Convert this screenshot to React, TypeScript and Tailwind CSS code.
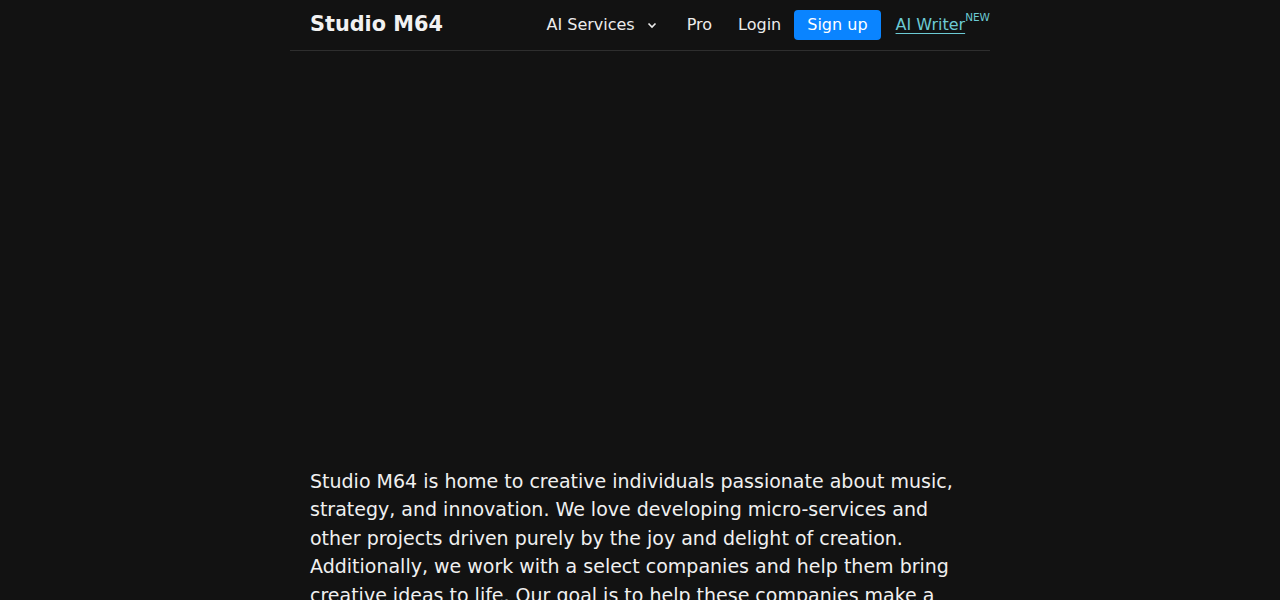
import React from 'react';

const NavLink = ({ children }: { children: React.ReactNode }) => (
  <a href="#" className="px-[13px] text-[16px] leading-[22px] text-[#ececec]">
    {children}
  </a>
);

export default function App() {
  return (
    <div className="min-h-[600px] bg-[#121212] text-[#ececec] font-['DejaVu_Sans',sans-serif]">
      <div className="mx-auto w-[700px]">
        {/* Header */}
        <header className="flex h-[51px] items-center justify-between border-b border-[#2e2e2e] pl-5">
          <a href="#" className="text-[20.8px] font-bold text-[#f2f2f2]">
            Studio M64
          </a>
          <nav className="flex items-center">
            <button className="flex items-center gap-[12px] pr-[17px] text-[16px] leading-[22px] text-[#ececec]">
              AI Services
              <svg width="10" height="7" viewBox="0 0 10 7" fill="none">
                <path d="M1.5 1.5 L5 5 L8.5 1.5" stroke="#ececec" strokeWidth="1.6" />
              </svg>
            </button>
            <NavLink>Pro</NavLink>
            <NavLink>Login</NavLink>
            <a href="#" className="rounded-[4px] bg-[#0a84ff] px-[13px] py-[4px] text-[16px] leading-[22px] text-white">
              Sign up
            </a>
            <a href="#" className="ml-[15px] text-[16px] leading-[22px] text-[#6ccad4] underline underline-offset-[3px]">
              AI Writer
            </a>
            <span className="mb-[14px] text-[10.5px] text-[#6ccad4]">NEW</span>
          </nav>
        </header>

        {/* Hero placeholder */}
        <div className="h-[416px]" />

        {/* About */}
        <section className="px-5">
          <p className="text-[19px] leading-[28.4px] text-[#f0f0f0]">
            Studio M64 is home to creative individuals passionate about music, strategy, and innovation. We love
            developing micro-services and other projects driven purely by the joy and delight of creation.
            Additionally, we work with a select companies and help them bring creative ideas to life. Our goal is to
            help these companies make a meaningful impact.
          </p>
        </section>
      </div>
    </div>
  );
}
